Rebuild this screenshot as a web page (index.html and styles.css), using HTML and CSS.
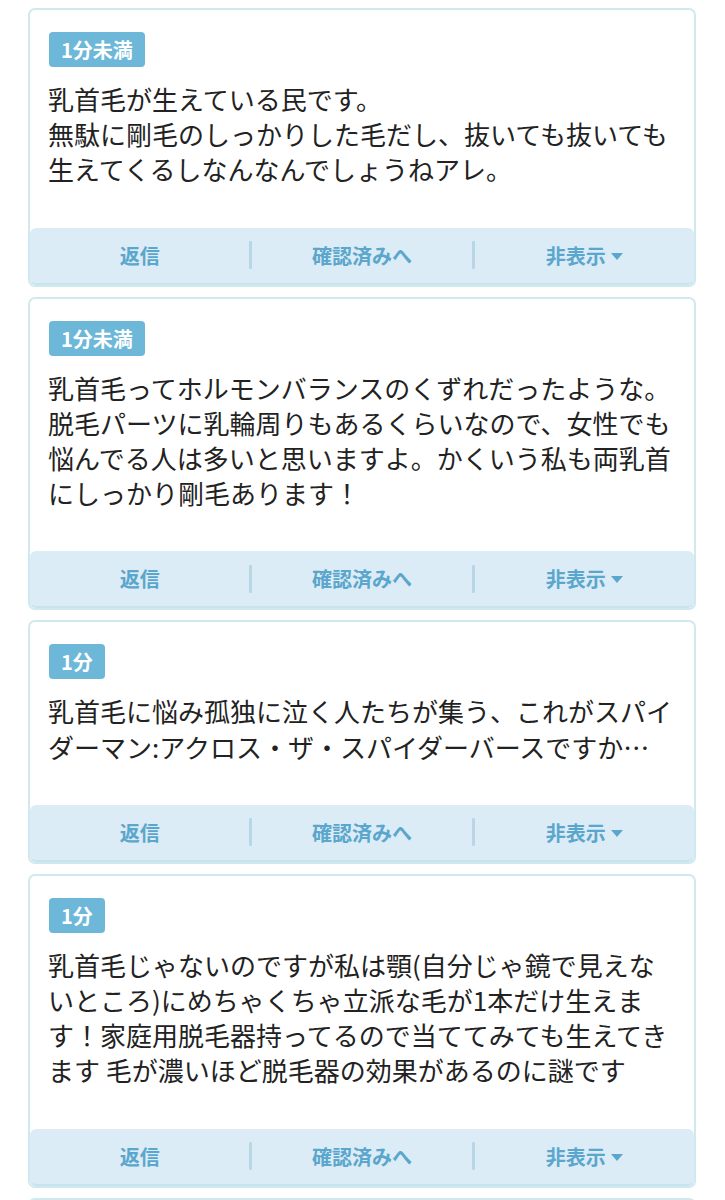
FILE: index.html
```html
<!DOCTYPE html>
<html lang="ja">
<head>
<meta charset="utf-8">
<link rel="stylesheet" href="styles.css">
</head>
<body>
<div class="list">
  <div class="card">
    <div class="head"><span class="badge">1分未満</span></div>
    <p class="body">乳首毛が生えている民です。<br>無駄に剛毛のしっかりした毛だし、抜いても抜いても<br>生えてくるしなんなんでしょうねアレ。</p>
    <div class="bar">
      <span class="act">返信</span><span class="sep"></span><span class="act">確認済みへ</span><span class="sep"></span><span class="act">非表示<svg class="caret" viewBox="0 0 12 7" width="12" height="7"><path d="M0 0H12L6 7Z" fill="currentColor"/></svg></span>
    </div>
  </div>
  <div class="card">
    <div class="head"><span class="badge">1分未満</span></div>
    <p class="body">乳首毛ってホルモンバランスのくずれだったような。<br>脱毛パーツに乳輪周りもあるくらいなので、女性でも<br>悩んでる人は多いと思いますよ。かくいう私も両乳首<br>にしっかり剛毛あります！</p>
    <div class="bar">
      <span class="act">返信</span><span class="sep"></span><span class="act">確認済みへ</span><span class="sep"></span><span class="act">非表示<svg class="caret" viewBox="0 0 12 7" width="12" height="7"><path d="M0 0H12L6 7Z" fill="currentColor"/></svg></span>
    </div>
  </div>
  <div class="card">
    <div class="head"><span class="badge">1分</span></div>
    <p class="body">乳首毛に悩み孤独に泣く人たちが集う、これがスパイ<br>ダーマン:アクロス・ザ・スパイダーバースですか…</p>
    <div class="bar">
      <span class="act">返信</span><span class="sep"></span><span class="act">確認済みへ</span><span class="sep"></span><span class="act">非表示<svg class="caret" viewBox="0 0 12 7" width="12" height="7"><path d="M0 0H12L6 7Z" fill="currentColor"/></svg></span>
    </div>
  </div>
  <div class="card">
    <div class="head"><span class="badge">1分</span></div>
    <p class="body">乳首毛じゃないのですが私は顎(自分じゃ鏡で見えな<br>いところ)にめちゃくちゃ立派な毛が1本だけ生えま<br>す！家庭用脱毛器持ってるので当ててみても生えてき<br>ます 毛が濃いほど脱毛器の効果があるのに謎です</p>
    <div class="bar">
      <span class="act">返信</span><span class="sep"></span><span class="act">確認済みへ</span><span class="sep"></span><span class="act">非表示<svg class="caret" viewBox="0 0 12 7" width="12" height="7"><path d="M0 0H12L6 7Z" fill="currentColor"/></svg></span>
    </div>
  </div>
  <div class="card card-next">
    <div class="spacer"></div>
  </div>
</div>
</body>
</html>
```

FILE: styles.css
```css
* { box-sizing: border-box; }
html, body { margin: 0; padding: 0; background: #ffffff; }
body {
  font-family: "Noto Sans CJK JP", "Noto Sans", sans-serif;
  color: #222222;
}
.list {
  padding: 8px 29px 0 28px;
  display: flex;
  flex-direction: column;
  gap: 10px;
}
.card {
  border: 2px solid #cfe9ef;
  border-radius: 7px;
  background: #ffffff;
  display: flex;
  flex-direction: column;
  overflow: hidden;
}
.head {
  padding: 22px 0 0 19px;
  display: flex;
}
.badge {
  display: inline-block;
  background: #6db7d9;
  color: #ffffff;
  font-weight: 700;
  font-size: 20px;
  line-height: 35px;
  height: 35px;
  padding: 0 12px;
  border-radius: 4px;
}
.body {
  margin: 14px 0 0 0;
  padding: 0 0 0 18px;
  font-size: 26px;
  line-height: 35.2px;
  white-space: nowrap;
  letter-spacing: 0;
}
.bar {
  margin-top: 41px;
  height: 57px;
  background: #dbecf6;
  border-bottom: 2px solid #c7e3ee;
  border-radius: 6px;
  display: flex;
  align-items: center;
}
.act {
  flex: 1;
  text-align: center;
  font-weight: 700;
  font-size: 20px;
  color: #5aa6cc;
  display: flex;
  align-items: center;
  justify-content: center;
  gap: 5px;
}
.caret { display: block; margin-top: 2px; }
.sep {
  width: 3px;
  height: 28px;
  background: #b8d6e6;
  border-radius: 1px;
}
.spacer { height: 120px; }
```
